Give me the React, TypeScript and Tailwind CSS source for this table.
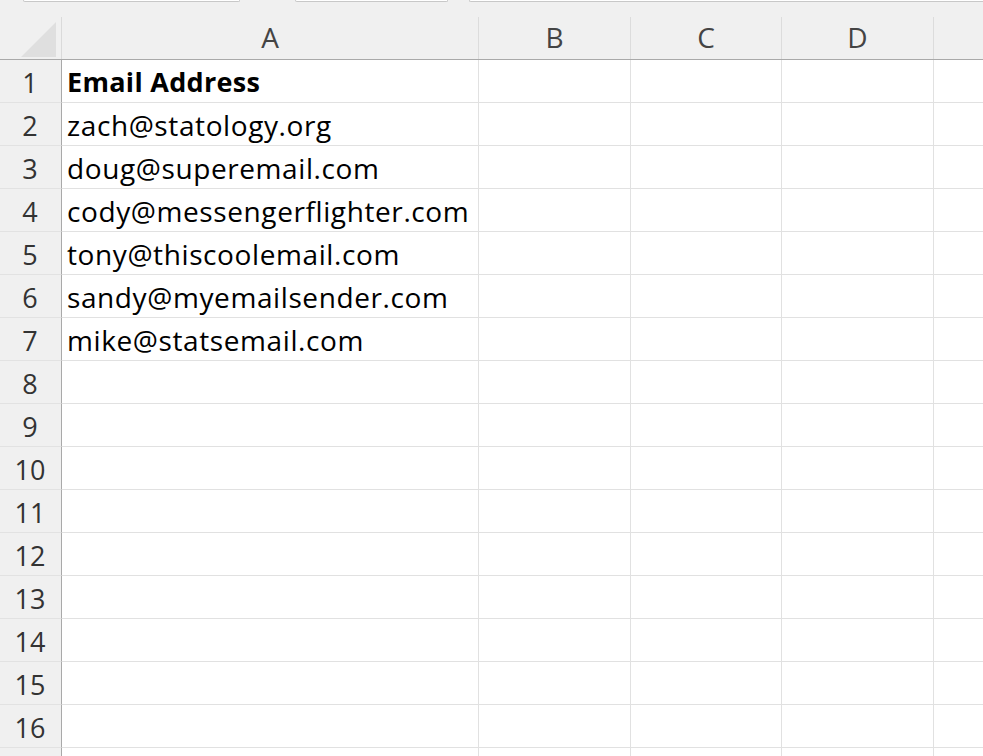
import React from "react";

const cols = [
  { label: "A", w: "w-[417px]" },
  { label: "B", w: "w-[152px]" },
  { label: "C", w: "w-[151px]" },
  { label: "D", w: "w-[152px]" },
];

const cells: Record<number, string> = {
  2: "zach@statology.org",
  3: "doug@superemail.com",
  4: "cody@messengerflighter.com",
  5: "tony@thiscoolemail.com",
  6: "sandy@myemailsender.com",
  7: "mike@statsemail.com",
};

const rows = Array.from({ length: 17 }, (_, i) => i + 1);

export default function App() {
  return (
    <div className="h-screen w-full overflow-hidden bg-[#f0f0f0] font-['Open_Sans',sans-serif]">
      {/* Formula bar remnants */}
      <div className="h-[17px] flex items-start">
        <div className="ml-[23px] w-[217px] h-[2px] bg-white border border-t-0 border-[#c8c8c8] rounded-b-[3px]" />
        <div className="ml-[55px] w-[153px] h-[2px] bg-white border border-t-0 border-[#c8c8c8] rounded-b-[3px]" />
        <div className="ml-[21px] flex-1 h-[2px] bg-white border border-t-0 border-r-0 border-[#c8c8c8] rounded-bl-[3px]" />
      </div>

      {/* Column headers */}
      <div className="flex h-[43px] border-b border-[#a9a9a9]">
        <div className="w-[62px] shrink-0 border-r border-[#dadada] flex items-end justify-end pr-[4px] pb-[2px]">
          <svg width="36" height="35" viewBox="0 0 36 35">
            <polygon points="35,0 35,35 0,35" fill="#dfdfdf" />
          </svg>
        </div>
        {cols.map((c) => (
          <div
            key={c.label}
            className={`${c.w} shrink-0 border-r border-[#dcdcdc] flex items-center justify-center text-[28px] text-[#444] leading-none pb-[2px]`}
          >
            {c.label}
          </div>
        ))}
        <div className="flex-1" />
      </div>

      {/* Rows */}
      {rows.map((r) => (
        <div key={r} className="flex h-[43px]">
          <div className="w-[62px] shrink-0 border-r border-[#a9a9a9] border-b border-b-[#e2e2e2] flex items-center justify-center text-[27px] text-[#333] leading-none pr-[1px] pt-[2px]">
            {r <= 16 ? r : ""}
          </div>
          {cols.map((c, ci) => (
            <div
              key={c.label}
              className={`${c.w} shrink-0 border-r border-b border-[#e1e1e1] bg-white leading-[42px] pl-[5px] text-black whitespace-nowrap ${
                r === 1 && ci === 0 ? "font-bold text-[27px] tracking-[0.3px] pt-[1px]" : "text-[28px] tracking-[0.6px] pt-[1px]"
              }`}
            >
              {ci === 0 ? (r === 1 ? "Email Address" : cells[r] ?? "") : ""}
            </div>
          ))}
          <div className="flex-1 border-b border-[#e1e1e1] bg-white" />
        </div>
      ))}
    </div>
  );
}
